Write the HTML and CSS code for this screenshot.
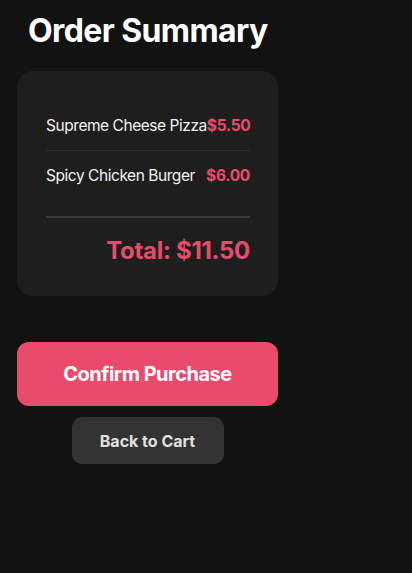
FILE: index.html
```html
<!DOCTYPE html>
<html lang="en">
<head>
    <meta charset="UTF-8">
    <meta name="viewport" content="width=device-width, initial-scale=1.0">
    <title>Order Summary</title>
    <link rel="stylesheet" href="styles.css">
</head>
<body>
    <div id="checkout">
        <h1>Order Summary</h1>
        <div class="summary-card">
            <div class="item-row">
                <span class="item-name">Supreme Cheese Pizza</span>
                <span class="item-price">$5.50</span>
            </div>
            <div class="item-row last">
                <span class="item-name">Spicy Chicken Burger</span>
                <span class="item-price">$6.00</span>
            </div>
            <div class="total-row">Total: $11.50</div>
        </div>
        <div class="actions">
            <button class="confirm-button">Confirm Purchase</button>
            <button class="back-button">Back to Cart</button>
        </div>
    </div>
</body>
</html>
```

FILE: styles.css
```css
body {
    font-family: Inter, 'Liberation Sans', sans-serif;
    margin: 0;
    background-color: #121212;
    color: #f2f2f2;
}
#checkout {
    width: 261px;
    padding: 0 17px;
}
h1 {
    margin: 0;
    padding: 12px 0 0 11px;
    font-size: 32px;
    line-height: 38px;
    font-weight: 700;
    letter-spacing: -0.6px;
    white-space: nowrap;
    color: #ffffff;
}
.summary-card {
    margin-top: 21px;
    background-color: #1e1e1e;
    border-radius: 16px;
    padding: 30px 28px 30px 29px;
}
.item-row {
    display: flex;
    justify-content: space-between;
    align-items: center;
    padding: 14.5px 0;
    font-size: 15.5px;
    line-height: 20px;
    letter-spacing: -0.45px;
    white-space: nowrap;
    border-bottom: 1px solid #2e2e2e;
}
.item-row.last {
    border-bottom: none;
}
.item-price {
    color: #e94b6c;
    font-weight: 700;
    letter-spacing: -0.3px;
}
.total-row {
    margin-top: 16px;
    border-top: 2px solid #383838;
    padding-top: 18px;
    text-align: right;
    font-size: 24px;
    line-height: 30px;
    font-weight: 700;
    letter-spacing: -0.3px;
    color: #e94b6c;
}
.actions {
    margin-top: 46px;
    display: flex;
    flex-direction: column;
    align-items: center;
    gap: 11px;
}
button {
    font-family: inherit;
    font-weight: 700;
    border: none;
    cursor: pointer;
}
.confirm-button {
    width: 100%;
    height: 64px;
    border-radius: 12px;
    background-color: #e94b6c;
    color: #ffffff;
    font-size: 20px;
    letter-spacing: -0.5px;
}
.back-button {
    width: 152px;
    height: 47px;
    border-radius: 10px;
    background-color: #333333;
    color: #e0e0e0;
    font-size: 16px;
}
```
